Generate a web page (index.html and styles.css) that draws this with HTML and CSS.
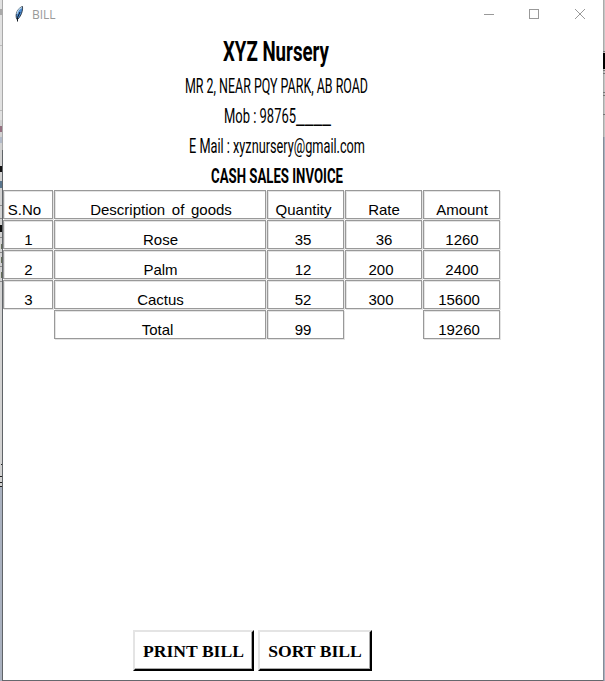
FILE: index.html
```
<!DOCTYPE html>
<html lang="en">
<head>
<meta charset="utf-8">
<title>BILL</title>
<link rel="stylesheet" href="styles.css">
</head>
<body>
<div class="screen">
  <svg class="edge" width="3" height="681" shape-rendering="crispEdges">
    <rect width="3" height="487" fill="#d2d2d2"/><rect width="3" height="120" fill="#e1e1e1"/>
    <rect y="487" width="3" height="194" fill="#a9b1bf"/>
    <path d="M0 9h2v6H0z" fill="#aaa"/><path d="M0 45.500h3M0 110.500h3" stroke="#bbb"/>
    <path d="M0 126h2v6H0z" fill="#957080"/><path d="M0 137h3v6H0z" fill="#b2bac9"/>
    <path d="M0 166h2v6H0zM0 225h2v7H0z" fill="#111"/><path d="M0 181h2v7H0z" fill="#59758d"/>
    <path d="M0 205.500h3M0 218.500h3M0 237.500h3M0 252.500h3M0 266.500h3M0 281.500h3" stroke="#888"/>
    <path d="M1 244h1v5H1zM1 257h1v6H1zM1 272h1v6H1z" fill="#66705a"/>
    <path d="M1 464.500h2M0 476.500h3M0 482.500h3M0 486.500h3" stroke="#222"/>
    <path d="M2.500 0v150" stroke="#aaa"/><path d="M2.500 150v531" stroke="#606468"/>
  </svg>
  <main class="window">
    <header class="titlebar">
      <svg class="feather" width="12" height="18" viewBox="0 0 12 18">
        <path d="M4 14.500C1.500 10 4.500 3 9.500 1.500C10 6 8 11 5 14Z" fill="#4b8bd2" stroke="#17202a" stroke-width=".8"/>
        <path d="M4 9C4.500 6 6.500 3.500 9 2.500" fill="none" stroke="#bbd5e8" stroke-width="1.300"/>
        <path d="M4.500 16.500V12.500L7 7" fill="none" stroke="#101820"/>
      </svg>
      <span class="caption">BILL</span>
      <svg class="controls" width="110" height="28" fill="none" stroke="#999">
        <path d="M4 14.500h10M49.500 9.500h9v9h-9z" shape-rendering="crispEdges"/><path d="M95 9l10 10M105 9l-10 10"/>
      </svg>
    </header>
    <svg class="heading" width="548" height="160">
      <text class="shop" x="220" y="31" textLength="106" lengthAdjust="spacingAndGlyphs">XYZ Nursery</text>
      <text x="182" y="63" textLength="183" lengthAdjust="spacingAndGlyphs">MR 2, NEAR PQY PARK, AB ROAD</text>
      <text x="221" y="93" textLength="72" lengthAdjust="spacingAndGlyphs">Mob : 98765</text>
      <text x="293" y="94" textLength="35" lengthAdjust="spacingAndGlyphs">____</text>
      <text x="186" y="123" textLength="176" lengthAdjust="spacingAndGlyphs">E Mail : xyznursery@gmail.com</text>
      <text class="invoice" x="208" y="153" textLength="132" lengthAdjust="spacingAndGlyphs">CASH SALES INVOICE</text>
    </svg>
    <section class="grid">
      <div class="cell sno">S.No</div><div class="cell wide">Description of goods</div><div class="cell head">Quantity</div><div class="cell">Rate</div><div class="cell">Amount</div>
      <div class="cell">1</div><div class="cell">Rose</div><div class="cell left">35</div><div class="cell">36</div><div class="cell">1260</div>
      <div class="cell">2</div><div class="cell">Palm</div><div class="cell left">12</div><div class="cell left">200</div><div class="cell">2400</div>
      <div class="cell">3</div><div class="cell">Cactus</div><div class="cell left">52</div><div class="cell left">300</div><div class="cell left">15600</div>
      <div></div><div class="cell left">Total</div><div class="cell left">99</div><div></div><div class="cell left">19260</div>
    </section>
    <footer class="actions">
      <button class="print">PRINT BILL</button>
      <button class="sort">SORT BILL</button>
    </footer>
  </main>
  <svg class="edge" width="2" height="681" shape-rendering="crispEdges">
    <rect width="2" height="137" fill="#c6c6c6"/><rect y="137" width="2" height="544" fill="#abb2bf"/>
    <path d="M.5 0v137" stroke="#aaa"/><path d="M.5 137v544" stroke="#858b97"/>
    <path d="M0 53h2v16H0z" fill="#000"/><path d="M0 51.500h2M0 70.500h2M0 73.500h2M0 92.500h2M0 95.500h2M0 114.500h2" stroke="#777"/>
  </svg>
</div>
</body>
</html>
```
FILE: styles.css
```
* { box-sizing: border-box; }
body { margin: 0; background: #fff; overflow: hidden; }
.screen { display: flex; width: 605px; height: 681px; }
.edge { flex: none; }
.window { width: 600px; height: 681px; display: flex; flex-direction: column; border-bottom: 1px solid #65686d; background: #fff; }
.titlebar { height: 30px; display: flex; align-items: flex-start; padding-left: 10px; flex: none; }
.feather { margin-top: 5px; }
.caption { margin: 6px 0 0 7px; font: 12px/17px "Open Sans", sans-serif; color: #999; }
.controls { margin-left: auto; margin-right: 13px; }
.heading { display: block; flex: none; font: 400 21px Roboto, "Liberation Sans", sans-serif; fill: #000; }
.shop { font-size: 28px; font-weight: bold; }
.invoice { font-weight: bold; }
.grid { display: grid; grid-template-columns: 51px 213px 78px 78px 78px; grid-auto-rows: 30px; width: 498px; }
.cell { border: 1px solid #999; box-shadow: inset 1px 1px #e4e4e4, 1px 1px #e4e4e4; margin: 0 1px 1px 0; text-align: center; font: 15px/19px "Liberation Sans", sans-serif; padding: 9px 0 0 1px; white-space: nowrap; }
.sno { padding-right: 8px; }
.left { padding-right: 6px; }
.head { padding-right: 5px; }
.wide { word-spacing: 2.5px; padding-left: 2px; }
.actions { display: flex; gap: 4px; margin-top: auto; margin-left: 130px; padding-bottom: 9px; }
button { height: 41px; padding: 0; background: #fff; color: #000; border: 2px solid; border-color: #e4e4e4 #000 #000 #e4e4e4; box-shadow: inset -1px -1px #aaa; font: bold 17.6px/20px "Liberation Serif", serif; text-align: center; white-space: nowrap; border-radius: 0; }
.print { width: 121px; }
.sort { width: 114px; }
```
